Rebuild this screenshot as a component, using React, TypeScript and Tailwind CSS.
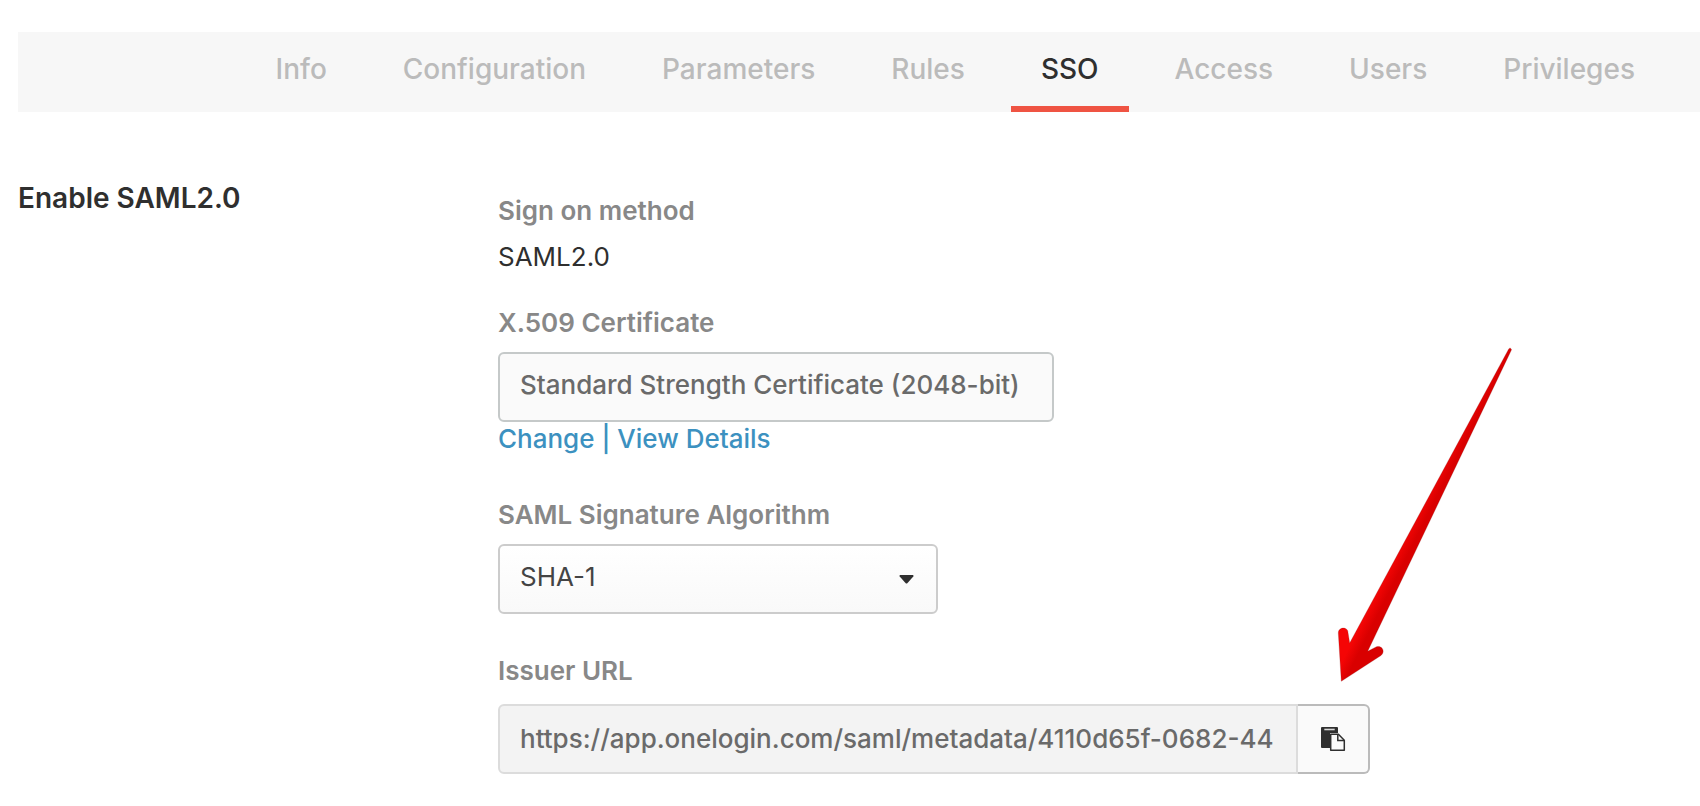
const tabs = ['Info', 'Configuration', 'Parameters', 'Rules', 'SSO', 'Access', 'Users', 'Privileges'];

function Tabs() {
  return (
    <nav className="ml-[18px] flex h-20 justify-end gap-4 bg-[#f7f7f7] pr-[35px] text-[28px] leading-[34px] font-medium">
      {tabs.map((tab) => (
        <a
          key={tab}
          href="#"
          aria-current={tab === 'SSO' ? 'page' : undefined}
          className={
            tab === 'SSO'
              ? 'border-b-[6px] border-[#ef5443] px-[30px] pt-5 text-[#2f2f2f]'
              : 'px-[30px] pt-5 text-[#bbbbbb]'
          }
        >
          {tab}
        </a>
      ))}
    </nav>
  );
}

function CopyIcon() {
  return (
    <svg className="h-[26px] w-[26px]" viewBox="0 0 26 26" aria-hidden="true">
      <path d="M1 2Q1 1 2 1H17Q18 1 18 2V7H10V22H2Q1 22 1 21Z" fill="#2f2f2f" />
      <path d="M4.3 2.7H14.7V4.3H4.3Z" fill="#d8d8d8" />
      <path d="M10.7 8.2H18.4L24.3 14.2V24.3H10.7Z" fill="#fafafa" stroke="#2f2f2f" strokeWidth="1.5" strokeLinejoin="round" />
      <path d="M17.8 8.5V14.4H24" fill="none" stroke="#2f2f2f" strokeWidth="1.5" />
    </svg>
  );
}

function Arrow() {
  return (
    <svg
      className="pointer-events-none absolute bottom-[91px] left-[38px] h-[336px] w-[176px]"
      viewBox="0 0 176 336"
      aria-hidden="true"
    >
      <defs>
        <linearGradient id="arrow-fill" gradientUnits="userSpaceOnUse" x1="12" y1="285" x2="32" y2="295">
          <stop offset="0.35" stopColor="#f50505" />
          <stop offset="0.85" stopColor="#d90000" />
        </linearGradient>
      </defs>
      <path
        d="M5.3 334.3L2.3 286C2.3 279.6 12 279.4 12 285.6L13.7 296L172.7 2C173.5 0.4 176 1.4 175.3 3.2L31.7 304.3L40.5 299.7C46.5 298 49.5 305 45 308.5Z"
        fill="url(#arrow-fill)"
        stroke="#8a2020"
        strokeOpacity="0.5"
        strokeWidth="0.5"
      />
    </svg>
  );
}

export default function App() {
  return (
    <div className="overflow-x-hidden bg-white pt-8 pb-8 font-['Inter',sans-serif] text-[26px] leading-8 text-[#2f2f2f]">
      <Tabs />
      <main className="flex pl-[18px]">
        <h2 className="w-[480px] shrink-0 pt-[70px] text-[28px] font-semibold">Enable SAML2.0</h2>
        <form className="flex flex-col items-start pt-[83px]">
          <h3 className="font-semibold text-[#888888]">Sign on method</h3>
          <p className="mt-[14px]">SAML2.0</p>

          <h3 className="mt-[34px] font-semibold text-[#888888]">X.509 Certificate</h3>
          <div className="mt-[13px] h-[70px] w-[556px] rounded-md border-2 border-[#c5c9c9] bg-[#fafafa] px-5 pt-[15px] font-medium whitespace-nowrap text-[#6a6a6a]">
            Standard Strength Certificate (2048-bit)
          </div>
          <div className="pt-px font-medium text-[#3c91c0]">
            <a href="#">Change</a> | <a href="#">View Details</a>
          </div>

          <label htmlFor="algorithm" className="mt-11 font-semibold text-[#888888]">
            SAML Signature Algorithm
          </label>
          <div className="mt-[13px] grid w-[440px] items-center">
            <select
              id="algorithm"
              className="col-start-1 row-start-1 h-[70px] w-full appearance-none rounded-md border-2 border-[#cccccc] bg-linear-to-b from-white to-[#f9f9f9] px-5 pb-1 text-[#444444]"
            >
              <option>SHA-1</option>
              <option>SHA-256</option>
            </select>
            <svg
              className="pointer-events-none col-start-1 row-start-1 mr-6 h-[9px] w-[15px] justify-self-end"
              viewBox="0 0 15 9"
              aria-hidden="true"
            >
              <path d="M1 0H14Q15 0.6 14.3 1.6L8.3 8.2Q7.5 8.9 6.7 8.2L0.7 1.6Q0 0.6 1 0Z" fill="#2f2f2f" />
            </svg>
          </div>

          <label htmlFor="issuer" className="mt-[41px] font-semibold text-[#888888]">
            Issuer URL
          </label>
          <div className="mt-[17px] flex">
            <input
              id="issuer"
              readOnly
              defaultValue="https://app.onelogin.com/saml/metadata/4110d65f-0682-44"
              className="h-[70px] w-[800px] rounded-l-md border-2 border-[#dcdcdc] bg-[#f3f3f3] px-5 pb-[2px] font-medium text-[#6a6a6a] outline-none"
            />
            <div className="relative">
              <button
                type="button"
                aria-label="Copy to clipboard"
                className="flex h-[70px] w-[72px] items-center justify-center rounded-r-md border-2 border-l-0 border-[#bbbbbb] bg-[#fafafa]"
              >
                <CopyIcon />
              </button>
              <Arrow />
            </div>
          </div>
        </form>
      </main>
    </div>
  );
}
